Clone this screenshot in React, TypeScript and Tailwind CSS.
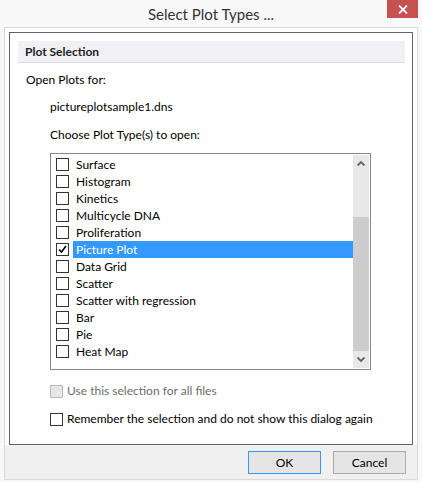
import { useState } from "react";

const plotTypes = [
  "Surface",
  "Histogram",
  "Kinetics",
  "Multicycle DNA",
  "Proliferation",
  "Picture Plot",
  "Data Grid",
  "Scatter",
  "Scatter with regression",
  "Bar",
  "Pie",
  "Heat Map"
];

function Check({ checked, disabled }: { checked?: boolean; disabled?: boolean }) {
  return (
    <span
      className={
        "flex size-[13px] shrink-0 items-center justify-center border " +
        (disabled ? "border-[#bcbcbc] bg-[#e6e6e6]" : "border-[#333333] bg-white")
      }
    >
      {checked && (
        <svg width="9" height="9" viewBox="0 0 9 9" aria-hidden>
          <path d="M1 4.5 L3.5 7 L8 1" fill="none" stroke="#000" strokeWidth="1.6" />
        </svg>
      )}
    </span>
  );
}

function Chevron({ up }: { up?: boolean }) {
  return (
    <svg width="8" height="5" viewBox="0 0 8 5" aria-hidden className={up ? "" : "rotate-180"}>
      <path d="M0.5 4.5 L4 1 L7.5 4.5" fill="none" stroke="#606060" strokeWidth="1.8" />
    </svg>
  );
}

export default function App() {
  const [selected] = useState("Picture Plot");

  return (
    <div
      className="relative h-[482px] w-[422px] overflow-hidden bg-[#f8f8f8] text-[12px] text-black"
      style={{ fontFamily: 'Lato, "Noto Sans", sans-serif' }}
    >
      {/* title bar */}
      <div className="flex h-[27px] items-center justify-center">
        <span className="text-[15px] leading-[20px] text-[#333333]">Select Plot Types ...</span>
      </div>
      <button className="absolute right-[4px] top-0 flex h-[18px] w-[31px] items-center justify-center bg-[#c75050]">
        <svg width="10" height="9" viewBox="0 0 10 9" aria-hidden>
          <path d="M1 0.5 L9 8.5 M9 0.5 L1 8.5" stroke="#fff" strokeWidth="1.8" />
        </svg>
      </button>

      {/* client */}
      <div className="mx-[4px] flex h-[453px] flex-col border border-[#dadada] bg-white">
        <div className="px-[4px] pt-[4px]">
          <div className="flex h-[413px] flex-col border border-[#646464]">
            <div className="ml-[8px] mt-[8px] flex h-[22px] w-[387px] items-center border-b border-[#dcdce2] bg-[#f0f0f5] pl-[7px] font-bold leading-[16px] text-[#1e1e1e]">
              Plot Selection
            </div>
            <p className="ml-[16px] mt-[9px] leading-[16px]">Open Plots for:</p>
            <p className="ml-[40px] mt-[11px] leading-[16px]">pictureplotsample1.dns</p>
            <p className="ml-[40px] mt-[12px] leading-[16px]">Choose Plot Type(s) to open:</p>

            <div className="ml-[40px] mt-[10px] flex h-[217px] w-[321px] border border-[#828790]">
              <div className="flex-1 pt-[2px]">
                {plotTypes.map((t) => {
                  const on = t === selected;
                  return (
                    <div key={t} className="flex h-[17px] items-center pl-[5px]">
                      <Check checked={on} />
                      <span
                        className={
                          "ml-[4px] flex h-[17px] flex-1 items-center pl-[3px] leading-[16px] " +
                          (on ? "bg-[#3399ff] text-white" : "")
                        }
                      >
                        {t}
                      </span>
                    </div>
                  );
                })}
              </div>
              <div className="my-[1px] mr-[1px] flex w-[16px] flex-col bg-[#e8e8e8]">
                <div className="flex h-[17px] items-center justify-center">
                  <Chevron up />
                </div>
                <div className="h-[45px]" />
                <div className="h-[134px] bg-[#cdcdcd]" />
                <div className="flex flex-1 items-center justify-center">
                  <Chevron />
                </div>
              </div>
            </div>

            <label className="ml-[40px] mt-[13px] flex h-[16px] items-center gap-[4px] leading-[16px] text-[#6d6d6d]">
              <Check disabled />
              <span>Use this selection for all files</span>
            </label>
            <label className="ml-[40px] mt-[12px] flex h-[16px] items-center gap-[4px] leading-[16px]">
              <Check />
              <span>Remember the selection and do not show this dialog again</span>
            </label>
          </div>
        </div>

        {/* button bar */}
        <div className="flex flex-1 items-start justify-end gap-[12px] bg-[#f0f0f0] pr-[11px] pt-[6px]">
          <button className="flex h-[23px] w-[73px] items-center justify-center border border-[#3399ff] bg-[#e5e5e5] leading-[16px]">
            OK
          </button>
          <button className="flex h-[23px] w-[73px] items-center justify-center border border-[#acacac] bg-[#e5e5e5] leading-[16px]">
            Cancel
          </button>
        </div>
      </div>
    </div>
  );
}
